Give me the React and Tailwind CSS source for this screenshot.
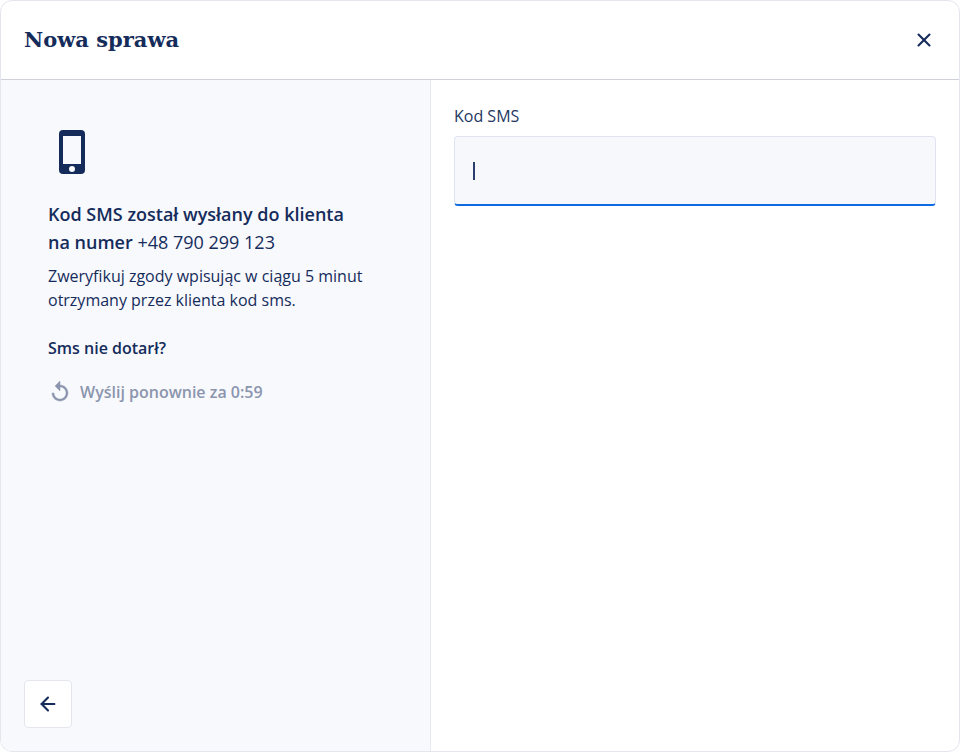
import React from "react";
import { X, ArrowLeft } from "lucide-react";

const App = () => {
  return (
    <div className="h-[752px] w-[960px] bg-white font-['Open_Sans',sans-serif] text-[#152c5b]">
      <div className="flex h-full flex-col overflow-hidden rounded-xl border border-[#e4e6ee]">
        {/* Header */}
        <div className="flex h-[79px] shrink-0 items-center justify-between border-b border-[#d0d2da] pl-[23px] pr-[24px]">
          <h1 className="font-['DejaVu_Serif',serif] text-[21px] font-bold leading-8">Nowa sprawa</h1>
          <button className="text-[#152c5b]">
            <X size={22} strokeWidth={2.3} />
          </button>
        </div>

        <div className="flex min-h-0 flex-1">
          {/* Left panel */}
          <div className="flex w-[430px] shrink-0 flex-col justify-between border-r border-[#e8e9f0] bg-[#f8f9fd] pb-[23px] pl-[23px] pt-[50px]">
            <div className="pl-6">
              <svg width="26" height="44" viewBox="0 0 26 44" className="ml-[11px]">
                <path
                  fillRule="evenodd"
                  fill="#152c5b"
                  d="M4 0h18a4 4 0 0 1 4 4v36a4 4 0 0 1-4 4H4a4 4 0 0 1-4-4V4a4 4 0 0 1 4-4zM4 6v28h18V6H4zm9 30a3 3 0 1 0 0 6a3 3 0 0 0 0-6z"
                />
              </svg>
              <p className="mt-[26px] text-[18px] font-semibold leading-7">
                Kod SMS został wysłany do klienta
                <br />
                na numer <span className="font-normal">+48 790 299 123</span>
              </p>
              <p className="mt-2 text-base leading-6">
                Zweryfikuj zgody wpisując w ciągu 5 minut
                <br />
                otrzymany przez klienta kod sms.
              </p>
              <p className="mt-6 text-base font-semibold leading-6">Sms nie dotarł?</p>
              <div className="mt-5 flex items-center gap-2 text-[#8b95ad]">
                <svg width="24" height="24" viewBox="0 0 24 24" fill="currentColor" stroke="currentColor" strokeWidth="0.4">
                  <path d="M12 5V1L7 6l5 5V7c3.310 0 6 2.690 6 6s-2.690 6-6 6-6-2.690-6-6H4c0 4.420 3.580 8 8 8s8-3.580 8-8-3.580-8-8-8z" />
                </svg>
                <span className="text-base font-semibold leading-6">Wyślij ponownie za 0:59</span>
              </div>
            </div>
            <button className="flex h-12 w-12 items-center justify-center rounded border border-[#e4e6ee] bg-white">
              <ArrowLeft size={22} strokeWidth={2.3} />
            </button>
          </div>

          {/* Right panel */}
          <div className="flex-1 pl-[23px] pr-[23px] pt-[24px]">
            <label className="block text-base leading-6 text-[#24385f]">Kod SMS</label>
            <div className="mt-2 flex h-[70px] items-center rounded border border-[#e1e4f0] border-b-2 border-b-[#0e6ae0] bg-[#f7f8fc] pl-[18px]">
              <div className="h-[18px] w-[1.500px] bg-[#2a3f6b]"></div>
            </div>
          </div>
        </div>
      </div>
    </div>
  );
};

export default App;
